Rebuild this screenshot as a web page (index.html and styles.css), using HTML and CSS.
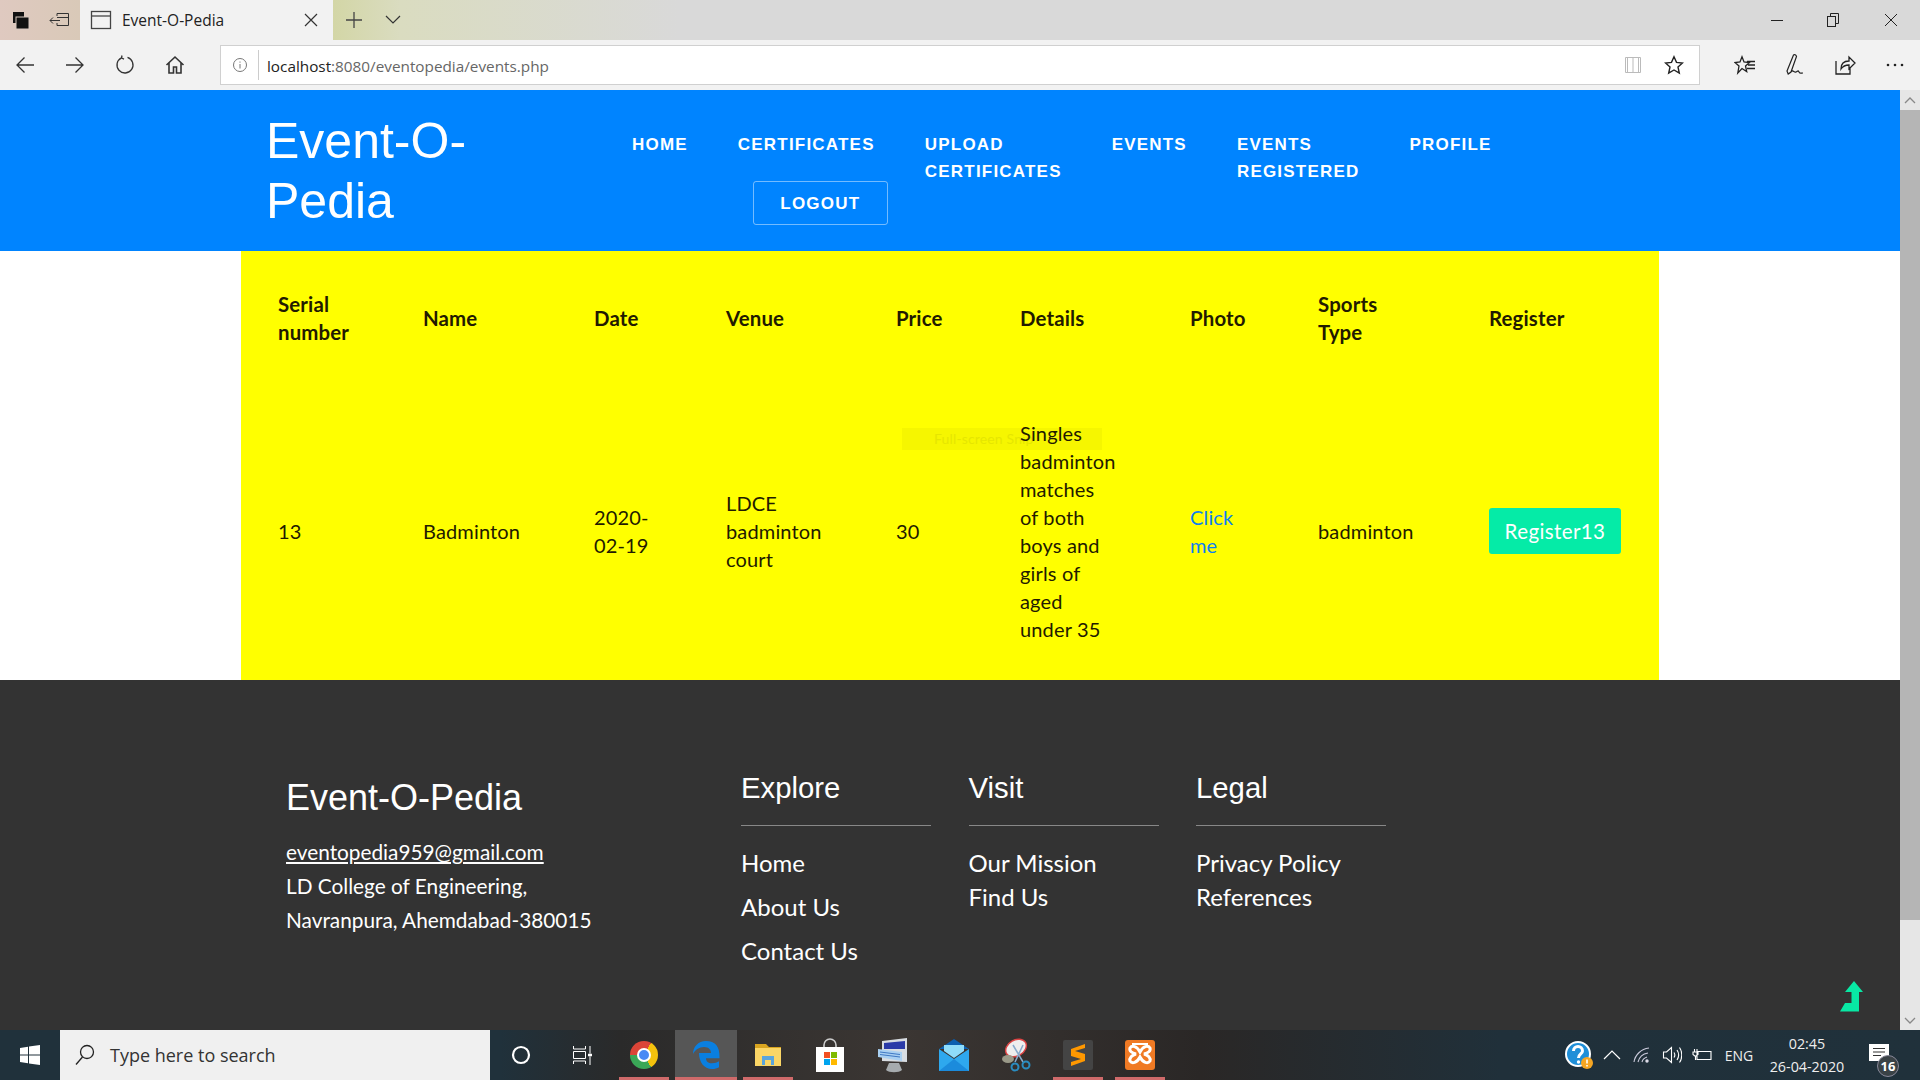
FILE: index.html
```html
<!DOCTYPE html>
<html lang="en">
<head>
<meta charset="utf-8">
<title>Event-O-Pedia</title>
<link rel="stylesheet" href="styles.css">
</head>
<body>
<div class="tabstrip">
  <div class="strip-btn"><svg width="22" height="22" viewBox="0 0 22 22"><rect x="4" y="3" width="11" height="11" fill="#111"/><rect x="7" y="8" width="13" height="12" fill="#111" stroke="#d8c9c0"/></svg></div>
  <div class="strip-btn"><svg width="24" height="20" viewBox="0 0 24 20" fill="none" stroke="#333"><path d="M9 6V3.500h11.500v12H9V13M9 7.500h11.500M2 10.500h10M5 7.500l-3 3 3 3"/></svg></div>
  <div class="tab">
    <svg width="22" height="20" viewBox="0 0 22 20" fill="none" stroke="#444" stroke-width="1.300"><rect x="1.500" y="1.500" width="19" height="17"/><path d="M1.500 6h19"/></svg>
    <span class="tab-title">Event-O-Pedia</span>
    <svg class="tab-close" width="16" height="16" viewBox="0 0 16 16" stroke="#333" stroke-width="1.200"><path d="M2 2l12 12M14 2L2 14"/></svg>
  </div>
  <div class="strip-btn strip-add"><svg width="18" height="18" viewBox="0 0 18 18" stroke="#444" stroke-width="1.300"><path d="M9 1v16M1 9h16"/></svg></div>
  <div class="strip-btn strip-more"><svg width="16" height="10" viewBox="0 0 16 10" fill="none" stroke="#333" stroke-width="1.200"><path d="M1 1l7 7 7-7"/></svg></div>
  <div class="win-controls">
    <div class="win-btn win-min"><svg width="14" height="14" viewBox="0 0 14 14" stroke="#222"><path d="M1 7.500h12"/></svg></div>
    <div class="win-btn"><svg width="14" height="16" viewBox="0 0 14 16" fill="none" stroke="#222"><rect x="1.500" y="4.500" width="8" height="10"/><path d="M4.500 4.500v-3h8v10h-3"/></svg></div>
    <div class="win-btn"><svg width="14" height="14" viewBox="0 0 14 14" stroke="#222"><path d="M1 1l12 12M13 1L1 13"/></svg></div>
  </div>
</div>

<div class="toolbar">
  <div class="tool"><svg width="20" height="18" viewBox="0 0 20 18" fill="none" stroke="#333" stroke-width="1.300"><path d="M19 9H2M9.500 1.500L2 9l7.500 7.500"/></svg></div>
  <div class="tool"><svg width="20" height="18" viewBox="0 0 20 18" fill="none" stroke="#333" stroke-width="1.300"><path d="M1 9h17M10.500 1.500L18 9l-7.500 7.500"/></svg></div>
  <div class="tool"><svg width="20" height="20" viewBox="0 0 20 20" fill="none" stroke="#333" stroke-width="1.300"><path d="M12.500 2.400A8 8 0 1 1 6.500 2.800M7 0.500l-.5 2.500 2.500 1.200"/></svg></div>
  <div class="tool"><svg width="20" height="20" viewBox="0 0 20 20" fill="none" stroke="#333" stroke-width="1.600"><path d="M1.500 10L10 2l8.500 8M4 8v10h4.500v-6h3v6H16V8"/></svg></div>
  <div class="address">
    <svg class="addr-info" width="16" height="16" viewBox="0 0 16 16" fill="none" stroke="#777"><circle cx="8" cy="8" r="6.500"/><path d="M8 7v4.500M8 4.500v1.200"/></svg>
    <span class="addr-text">localhost<span class="addr-path">:8080/eventopedia/events.php</span></span>
    <svg class="addr-book" width="18" height="18" viewBox="0 0 18 18" fill="none" stroke="#bbb"><path d="M1.500 1.500h15v15h-15zM9 1.500v15M3.500 1.500v15M14.500 1.500v15"/></svg>
    <svg class="addr-star" width="20" height="20" viewBox="0 0 20 20" fill="none" stroke="#222" stroke-width="1.400"><path d="M10 1.800l2.500 5.600 6 .6-4.500 4 1.300 6L10 15l-5.300 3 1.300-6-4.500-4 6-.6z"/></svg>
  </div>
  <div class="tool tool-first"><svg width="22" height="20" viewBox="0 0 22 20" fill="none" stroke="#222" stroke-width="1.300"><path d="M8 1.800L10 7l5.500.5-4 3.500 1.200 5.500L8 13.500 3.800 18 5 11 1 7.500 6 7zM13 6.500h8M14 10h7M13 13.500h8"/></svg></div>
  <div class="tool"><svg width="22" height="24" viewBox="0 0 22 24" fill="none" stroke="#222" stroke-width="1.200"><path d="M9.500 2L3 18l1.200 3L7 19 12.500 3.500C12 1.800 10.500 1.200 9.500 2zM7 19c2-3 3 1 5 0s2-2 3 0 2 1 4 1"/></svg></div>
  <div class="tool"><svg width="22" height="22" viewBox="0 0 22 22" fill="none" stroke="#222" stroke-width="1.300"><path d="M2 7v13h14v-6M7 15c0-5 3-8 8-8V3l6 6-6 6v-4c-4 0-6 1-8 4z"/></svg></div>
  <div class="tool"><svg width="20" height="4" viewBox="0 0 20 4" fill="#222"><circle cx="3" cy="2" r="1.300"/><circle cx="10" cy="2" r="1.300"/><circle cx="17" cy="2" r="1.300"/></svg></div>
</div>

<div class="viewport">
  <div class="page">
    <header class="site-header">
      <div class="brand">Event-O-Pedia</div>
      <nav class="nav">
        <a class="nav-link">HOME</a>
        <a class="nav-link">CERTIFICATES</a>
        <a class="nav-link nav-tall">UPLOAD<br>CERTIFICATES</a>
        <a class="nav-link">EVENTS</a>
        <a class="nav-link nav-tall">EVENTS<br>REGISTERED</a>
        <a class="nav-link">PROFILE</a>
        <a class="logout">LOGOUT</a>
      </nav>
    </header>

    <main class="events">
      <div class="ghost">Full-screen Snip</div>
      <table class="event-table">
        <colgroup>
          <col class="c1"><col class="c2"><col class="c3"><col class="c4"><col class="c5"><col class="c6"><col class="c7"><col class="c8"><col class="c9">
        </colgroup>
        <thead>
          <tr>
            <th>Serial number</th><th>Name</th><th>Date</th><th>Venue</th><th>Price</th><th>Details</th><th>Photo</th><th>Sports Type</th><th>Register</th>
          </tr>
        </thead>
        <tbody>
          <tr>
            <td>13</td>
            <td>Badminton</td>
            <td>2020-02-19</td>
            <td>LDCE badminton court</td>
            <td>30</td>
            <td>Singles badminton matches of both boys and girls of aged under 35</td>
            <td><a class="link">Click me</a></td>
            <td>badminton</td>
            <td><a class="register">Register13</a></td>
          </tr>
        </tbody>
      </table>
    </main>

    <footer class="site-footer">
      <div class="foot-about">
        <div class="foot-brand">Event-O-Pedia</div>
        <a class="foot-mail">eventopedia959@gmail.com</a>
        <div>LD College of Engineering,</div>
        <div>Navranpura, Ahemdabad-380015</div>
      </div>
      <div class="foot-col">
        <h3 class="foot-head">Explore</h3>
        <ul class="foot-list foot-list-wide"><li>Home</li><li>About Us</li><li>Contact Us</li></ul>
      </div>
      <div class="foot-col">
        <h3 class="foot-head">Visit</h3>
        <ul class="foot-list"><li>Our Mission</li><li>Find Us</li></ul>
      </div>
      <div class="foot-col">
        <h3 class="foot-head">Legal</h3>
        <ul class="foot-list"><li>Privacy Policy</li><li>References</li></ul>
      </div>
      <svg class="to-top" width="23" height="31" viewBox="0 0 23 31" fill="#08e8a4"><path d="M14 0L23 11H19V30.500H0L5 22H11.500V11H5z"/></svg>
    </footer>
  </div>
  <div class="scrollbar">
    <div class="sb-arrow"><svg width="12" height="7" viewBox="0 0 12 7" fill="none" stroke="#888" stroke-width="1.300"><path d="M1 6l5-5 5 5"/></svg></div>
    <div class="sb-thumb"></div>
    <div class="sb-track"><svg width="12" height="7" viewBox="0 0 12 7" fill="none" stroke="#888" stroke-width="1.300"><path d="M1 1l5 5 5-5"/></svg></div>
  </div>
</div>

<div class="taskbar">
  <div class="start"><svg width="20" height="20" viewBox="0 0 20 20" fill="#fff"><path d="M0 3l8-1.200V9.500H0zM9 1.600L20 0v9.500H9zM0 10.500h8v7.700L0 17zM9 10.500h11V20L9 18.400z"/></svg></div>
  <div class="search">
    <svg width="20" height="22" viewBox="0 0 20 22" fill="none" stroke="#222" stroke-width="1.300"><circle cx="12" cy="8" r="6.500"/><path d="M7.500 13L1 20.500"/></svg>
    <span>Type here to search</span>
  </div>
  <div class="task-sys"><svg width="20" height="20" viewBox="0 0 20 20" fill="none" stroke="#fff" stroke-width="2.200"><circle cx="10" cy="10" r="8"/></svg></div>
  <div class="task-sys"><svg width="20" height="20" viewBox="0 0 20 20" fill="none" stroke="#fff"><path d="M1.500 1v3h12V1M1.500 6.500h12v7h-12zM1.500 19v-3h12v3M18 1v7M18 12v8"/><path d="M16.500 9h3v2h-3z" fill="#fff"/></svg></div>

  <div class="tile tile-open"><div class="chrome"><div class="chrome-in"></div></div></div>
  <div class="tile tile-open tile-active"><svg width="28" height="30" viewBox="0 0 28 30"><path fill="#0a7fe0" d="M14 1C6 1 1 7 1 14c2-4 6-7 11-7 5 0 7 3 7 6H7c0 9 5 16 13 16 3 0 5-.6 7-1.800v-6c-2 1.300-4 2-7 2-4 0-6-2-6-5h13.500C28 6 23 1 14 1z"/></svg></div>
  <div class="tile tile-open"><svg width="28" height="24" viewBox="0 0 28 24"><path fill="#d9a520" d="M1 1h11l3 3h12v6H1z"/><path fill="#fbd666" d="M1 5h26v18H1z"/><path fill="#5aa5dc" d="M8 22v-9h12v9h-3v-5h-6v5z"/></svg></div>
  <div class="tile"><svg width="28" height="34" viewBox="0 0 28 34"><path fill="none" stroke="#ccc" stroke-width="1.600" d="M8 12V7a6 6 0 0 1 12 0v5"/><rect x="0" y="9" width="28" height="25" fill="#fff"/><rect x="8" y="14" width="6" height="6" fill="#f25022"/><rect x="15" y="14" width="6" height="6" fill="#7fba00"/><rect x="8" y="21" width="6" height="6" fill="#00a4ef"/><rect x="15" y="21" width="6" height="6" fill="#ffb900"/></svg></div>
  <div class="tile"><svg width="30" height="36" viewBox="0 0 30 36"><path fill="#d8dde2" d="M5 4l25-3v24L5 24z"/><path fill="#2a3aa8" d="M7 6l21-2v8L7 12z"/><path fill="#a9d0f2" d="M1 12l24 3v9L1 20z"/><path stroke="#3f78c4" stroke-width="1" d="M3 15l20 2.500M3 17.500l20 2.500"/><path fill="#a6abae" d="M12 26h10l3 7c-3 3-13 3-16 0z"/></svg></div>
  <div class="tile"><svg width="30" height="32" viewBox="0 0 30 32"><path fill="#0a5fb0" d="M15 0L30 10H0z"/><path fill="#2ea8ee" d="M0 10l15 10 15-10v22H0z"/><path fill="#8fdcf9" d="M5 6h20v6l-10 7-10-7z"/><path fill="#1b8bdc" d="M0 32l15-12 15 12z"/></svg></div>
  <div class="tile"><svg width="30" height="34" viewBox="0 0 30 34"><ellipse cx="15" cy="10" rx="11" ry="8" transform="rotate(-30 15 10)" fill="#eee" stroke="#d44" stroke-width="1.500"/><ellipse cx="7" cy="21" rx="6" ry="4" fill="#998"/><path d="M12 7l10 17M22 7L14 24" stroke="#8ac" stroke-width="1.500"/><circle cx="25" cy="27" r="3.500" fill="none" stroke="#2a8cc0" stroke-width="2"/><circle cx="14" cy="29" r="3.500" fill="none" stroke="#2a8cc0" stroke-width="2"/></svg></div>
  <div class="tile tile-open"><svg width="30" height="30" viewBox="0 0 30 30"><rect width="30" height="30" rx="2" fill="#444"/><path fill="#ff9800" d="M22 4L8 9v7l10 3-10 3v4l14-5v-7L12 11l10-3z"/></svg></div>
  <div class="tile tile-open"><svg width="30" height="30" viewBox="0 0 30 30"><rect width="30" height="30" rx="3" fill="#f07a24"/><path fill="none" stroke="#fff" stroke-width="3" d="M5 8c2-3 7-2 10 4 3-6 8-7 10-4 1 3-2 5-6 6 4 1 7 4 6 7-2 3-7 2-10-4-3 6-8 7-10 4-1-3 2-6 6-7-4-1-7-3-6-6z"/><path stroke="#fff" stroke-width="2" d="M7 4h16"/></svg></div>

  <div class="tray">
    <div class="tray-help"><svg width="30" height="30" viewBox="0 0 30 30"><circle cx="14" cy="14" r="12" fill="#1f8fd8" stroke="#fff" stroke-width="2"/><path fill="none" stroke="#fff" stroke-width="3" d="M9.500 11c0-6 9-6 9 0 0 3-4 3-4 7"/><circle cx="14.500" cy="22" r="1.700" fill="#fff"/><circle cx="23" cy="23" r="6" fill="#f5a623"/><path stroke="#fff" stroke-width="1.600" d="M23 19.500v4M23 25v1.500"/></svg></div>
    <div class="tray-item"><svg width="18" height="10" viewBox="0 0 18 10" fill="none" stroke="#fff" stroke-width="1.200"><path d="M1 9l8-8 8 8"/></svg></div>
    <div class="tray-item"><svg width="18" height="16" viewBox="0 0 18 16" fill="none" stroke="#ccd" stroke-width="1.100"><path d="M1 15C2 8 8 2 16 1M5 15c1-4 4-8 10-9M9 15c.5-2 2-4 5-5"/><circle cx="14" cy="14" r="1.200" fill="#fff"/></svg></div>
    <div class="tray-item"><svg width="20" height="18" viewBox="0 0 20 18" fill="none" stroke="#fff" stroke-width="1.100"><path d="M1.500 6h3l5-4.500v15l-5-4.500h-3zM12 6.500c1 1.500 1 3.500 0 5M15 4c2 3 2 7 0 10M17.500 1.500c3 4 3 11 0 15"/></svg></div>
    <div class="tray-item"><svg width="20" height="12" viewBox="0 0 20 12" fill="none" stroke="#fff" stroke-width="1.100"><path d="M5 2.500h14v8H5zM2.500 0v3M5 0v3M1 3h5v2.500L3.500 7.500 1 5.500zM3.500 7.500V11"/></svg></div>
    <div class="tray-lang">ENG</div>
    <div class="tray-clock"><div>02:45</div><div>26-04-2020</div></div>
    <div class="tray-notif">
      <svg width="20" height="18" viewBox="0 0 20 18" fill="#fff"><path d="M0 0h20v17H0z"/><path stroke="#333" stroke-width="1.200" d="M4 4.500h12M4 8h12M4 11.500h8"/></svg>
      <span class="notif-badge">16</span>
    </div>
  </div>
</div>
</body>
</html>
```
FILE: styles.css
```css
* { box-sizing: border-box; }
html, body { margin: 0; height: 100%; }
body {
  display: flex;
  flex-direction: column;
  width: 1920px;
  height: 1080px;
  overflow: hidden;
  background: #fff;
  font-family: "Open Sans", "Noto Sans", sans-serif;
}

/* browser tab strip */
.tabstrip {
  flex: 0 0 40px;
  display: flex;
  align-items: center;
  background: linear-gradient(90deg, #dfc9c0 0, #d9c9b8 80px, #d3d6a6 333px, #dadcc0 400px, #d9d9d9 680px);
}
.strip-btn { flex: 0 0 40px; display: flex; align-items: center; justify-content: center; }
.strip-add { flex: 0 0 42px; }
.strip-more { flex: 0 0 36px; }
.tab {
  flex: 0 0 253px;
  height: 40px;
  display: flex;
  align-items: center;
  padding: 0 14px 0 10px;
  background: #f2f2f2;
  font-size: 15.500px;
  color: #222;
}
.tab-title { margin-left: 10px; flex: 1; line-height: 38px; height: 38px; }
.win-controls { margin-left: auto; display: flex; }
.win-btn { width: 58px; height: 40px; display: flex; align-items: center; justify-content: center; }
.win-min { padding-left: 4px; }

/* browser toolbar */
.toolbar {
  flex: 0 0 50px;
  display: flex;
  align-items: center;
  background: #f2f2f2;
}
.tool { flex: 0 0 50px; display: flex; align-items: center; justify-content: center; }
.tool-first { margin-left: 20px; }
.address {
  flex: 1;
  height: 40px;
  margin-left: 20px;
  display: flex;
  align-items: center;
  background: #fff;
  border: 1px solid #d0d0d0;
  font-size: 15.300px;
  color: #222;
}
.addr-info { margin-left: 11px; }
.addr-text {
  margin-left: 10px;
  padding: 2px 0 0 8px;
  border-left: 1px solid #ccc;
  line-height: 28px;
  flex: 1;
}
.addr-path { color: #666; }
.addr-star { margin: 0 15px 0 22px; }

/* page + scrollbar */
.viewport { flex: 1; display: flex; min-height: 0; }
.page { flex: 0 0 1900px; display: flex; flex-direction: column; overflow: hidden; }
.scrollbar { flex: 0 0 20px; display: flex; flex-direction: column; background: #e6e6e6; }
.sb-arrow { flex: 0 0 20px; display: flex; align-items: center; justify-content: center; }
.sb-thumb { flex: 0 0 810px; background: #b5b5b5; }
.sb-track { flex: 1; display: flex; align-items: flex-end; justify-content: center; padding-bottom: 6px; }

/* site header */
.site-header {
  flex: 0 0 161px;
  display: flex;
  padding: 21px 0 0 266px;
  background: #0084ff;
  color: #fff;
}
.brand {
  width: 240px;
  margin-right: 126px;
  font: 50px/60px "Liberation Sans", Arial, sans-serif;
}
.nav {
  display: grid;
  grid-template-columns: repeat(6, auto);
  grid-template-rows: 44px auto;
  justify-content: start;
  column-gap: 50px;
  padding-top: 20px;
  font: bold 17px/27px "Liberation Sans", Arial, sans-serif;
  letter-spacing: 1.200px;
  align-self: start;
}
.nav-tall { grid-row: span 2; }
.logout {
  grid-column: 2;
  grid-row: 2;
  justify-self: start;
  width: 135px;
  height: 44px;
  margin: 6px -13px 0 15px;
  display: flex;
  align-items: center;
  justify-content: center;
  border: 1px solid rgba(255, 255, 255, .45);
  border-radius: 3px;
}

/* events table */
.events {
  position: relative;
  flex: 0 0 429px;
  width: 1418px;
  margin: 0 auto;
  background: #ff0;
  font: 20px/28px Lato, "Open Sans", sans-serif;
  letter-spacing: .15px;
  color: #221a00;
}
.ghost {
  position: absolute;
  left: 661px;
  top: 177px;
  width: 200px;
  height: 22px;
  padding-left: 32px;
  font-size: 14px;
  line-height: 22px;
  background: #f6f600;
  color: #e6e600;
}
.event-table {
  position: relative;
  width: 100%;
  table-layout: fixed;
  border-collapse: collapse;
}
.c1 { width: 145px; } .c2 { width: 171px; } .c3 { width: 132px; }
.c4 { width: 170px; } .c5 { width: 124px; } .c6 { width: 170px; }
.c7 { width: 128px; } .c8 { width: 171px; } .c9 { width: 207px; }
.event-table th {
  height: 134px;
  padding: 0 37px 1px;
  font-size: 20.400px;
  font-weight: 700;
  text-align: left;
}
.event-table td { height: 295px; padding: 0 37px 3px; }
.link { color: #0d7ff0; }
.register {
  display: block;
  width: 132px;
  height: 46px;
  background: #05eba7;
  color: #fff;
  border-radius: 3px;
  text-align: center;
  font-size: 20.500px;
  letter-spacing: .4px;
  line-height: 46px;
}

/* footer */
.site-footer {
  position: relative;
  flex: 1;
  display: flex;
  padding: 91px 0 0 286px;
  background: #333;
  color: #fff;
  font: 24px/34px Lato, "Open Sans", sans-serif;
}
.foot-about { flex: 0 0 455px; padding-top: 5px; font-size: 20.800px; }
.foot-brand { font: 36px/44px "Liberation Sans", Arial, sans-serif; margin-bottom: 15px; }
.foot-mail { text-decoration: underline; }
.foot-col { flex: 0 0 190px; margin-right: 37.500px; }
.foot-head {
  margin: 0;
  padding-bottom: 20px;
  border-bottom: 1px solid #888;
  font: 400 29.300px/34px "Liberation Sans", Arial, sans-serif;
}
.foot-list { list-style: none; margin: 20px 0 0; padding: 0; }
.foot-list-wide li { margin-bottom: 10px; }
.to-top { position: absolute; right: 37px; bottom: 18px; }

/* windows taskbar */
.taskbar {
  flex: 0 0 50px;
  display: flex;
  background: linear-gradient(90deg, #20313b 0, #20313b 500px, #2a2a2a 620px, #3b3633 900px, #2a2726 1200px, #20303a 1500px, #20313b 100%);
  color: #fff;
}
.start { flex: 0 0 60px; display: flex; align-items: center; justify-content: center; }
.search {
  flex: 0 0 430px;
  display: flex;
  align-items: center;
  gap: 15px;
  padding-left: 15px;
  background: #f0f0f0;
  color: #333;
  font-size: 18px;
}
.task-sys { flex: 0 0 61.500px; display: flex; align-items: center; justify-content: center; }
.tile {
  position: relative;
  flex: 0 0 62px;
  display: flex;
  align-items: center;
  justify-content: center;
}
.tile-open::after {
  content: "";
  position: absolute;
  left: 6px;
  right: 6px;
  bottom: 0;
  height: 3px;
  background: #cf6a6a;
}
.tile-active { background: #565656; }
.tile-active::after { left: 0; right: 0; }
.chrome {
  width: 28px;
  height: 28px;
  border-radius: 50%;
  display: flex;
  align-items: center;
  justify-content: center;
  background: conic-gradient(from 30deg, #f4c20d 0 120deg, #3aa757 120deg 240deg, #db4437 240deg 360deg);
}
.chrome-in {
  width: 14px;
  height: 14px;
  border-radius: 50%;
  background: #4a8af4;
  border: 2px solid #fff;
}
.tray { margin-left: auto; display: flex; align-items: center; }
.tray-help { flex: 0 0 37px; display: flex; align-items: center; justify-content: center; }
.tray-item { flex: 0 0 30px; display: flex; align-items: center; justify-content: center; }
.tray-lang { flex: 0 0 44px; text-align: center; font-size: 14px; color: #eee; }
.tray-clock { flex: 0 0 92px; text-align: center; font-size: 14.300px; line-height: 23px; color: #eee; }
.tray-notif { position: relative; flex: 0 0 67px; height: 50px; display: flex; align-items: center; padding: 0 0 4px 16px; }
.notif-badge {
  position: absolute;
  left: 24px;
  top: 25px;
  width: 22px;
  height: 22px;
  border: 1px solid #889;
  border-radius: 50%;
  background: #3a4246;
  font-size: 13px;
  font-weight: 700;
  line-height: 20px;
  text-align: center;
}
```
